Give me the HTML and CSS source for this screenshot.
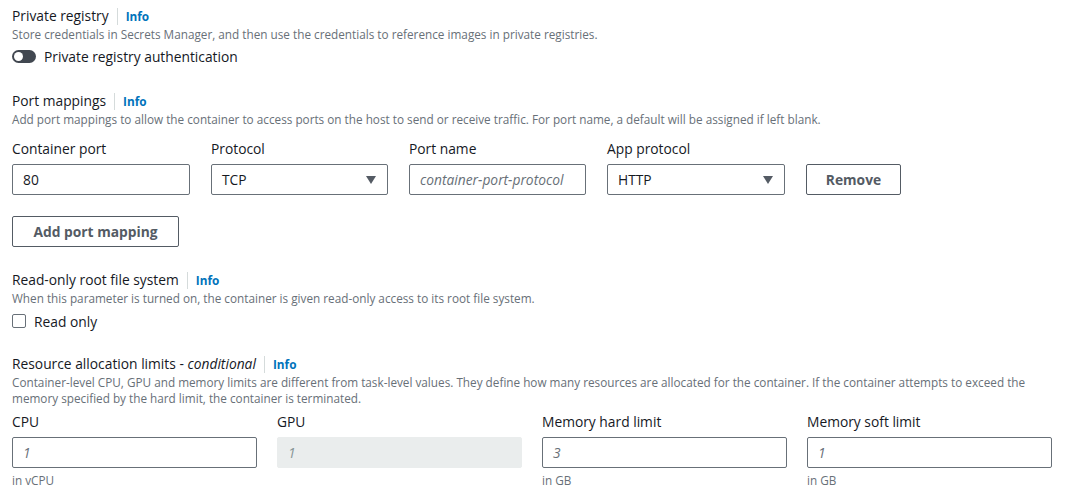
FILE: index.html
```html
<!DOCTYPE html>
<html>
<head>
<meta charset="utf-8">
<link rel="stylesheet" href="styles.css">
</head>
<body>
<div class="page">
  <section class="section s-registry">
    <div class="title-row"><span class="title">Private registry</span><span class="sep"></span><a class="info">Info</a></div>
    <div class="desc">Store credentials in Secrets Manager, and then use the credentials to reference images in private registries.</div>
    <div class="toggle-row"><span class="toggle"><span class="knob"></span></span><span class="toggle-label">Private registry authentication</span></div>
  </section>

  <section class="section s-ports">
    <div class="title-row"><span class="title">Port mappings</span><span class="sep"></span><a class="info">Info</a></div>
    <div class="desc">Add port mappings to allow the container to access ports on the host to send or receive traffic. For port name, a default will be assigned if left blank.</div>
    <div class="port-grid">
      <div class="field"><div class="label">Container port</div><div class="input">80</div></div>
      <div class="field"><div class="label">Protocol</div><div class="input select">TCP<span class="caret"></span></div></div>
      <div class="field"><div class="label">Port name</div><div class="input placeholder">container-port-protocol</div></div>
      <div class="field"><div class="label">App protocol</div><div class="input select">HTTP<span class="caret"></span></div></div>
      <div class="field field-btn"><div class="btn">Remove</div></div>
    </div>
    <div class="btn btn-add">Add port mapping</div>
  </section>

  <section class="section s-readonly">
    <div class="title-row"><span class="title">Read-only root file system</span><span class="sep"></span><a class="info">Info</a></div>
    <div class="desc">When this parameter is turned on, the container is given read-only access to its root file system.</div>
    <div class="check-row"><span class="checkbox"></span><span class="check-label">Read only</span></div>
  </section>

  <section class="section s-resources">
    <div class="title-row"><span class="title">Resource allocation limits - <em>conditional</em></span><span class="sep"></span><a class="info">Info</a></div>
    <div class="desc desc-wide">Container-level CPU, GPU and memory limits are different from task-level values. They define how many resources are allocated for the container. If the container attempts to exceed the memory specified by the hard limit, the container is terminated.</div>
    <div class="res-grid">
      <div class="field"><div class="label">CPU</div><div class="input placeholder">1</div><div class="hint">in vCPU</div></div>
      <div class="field"><div class="label">GPU</div><div class="input placeholder disabled">1</div></div>
      <div class="field"><div class="label">Memory hard limit</div><div class="input placeholder">3</div><div class="hint">in GB</div></div>
      <div class="field"><div class="label">Memory soft limit</div><div class="input placeholder">1</div><div class="hint">in GB</div></div>
    </div>
  </section>
</div>
</body>
</html>
```

FILE: styles.css
```css
* { box-sizing: border-box; }
html, body { margin: 0; padding: 0; background: #ffffff; }
body {
  font-family: "Open Sans", "Noto Sans", Arial, sans-serif;
  color: #16191f;
  font-size: 13.8px;
}
.page {
  padding: 6px 12px 0 12px;
  width: 1060px;
}
.section { display: flex; flex-direction: column; }
.title-row {
  display: flex;
  align-items: center;
  height: 20px;
  line-height: 20px;
}
.title { font-size: 13.8px; color: #16191f; }
.title em { font-style: italic; }
.sep {
  width: 1px;
  height: 17px;
  background: #d5dbdb;
  margin: 0 8px 0 8px;
}
.info {
  font-size: 11.8px;
  font-weight: 700;
  color: #0073bb;
}
.desc {
  font-size: 11.75px;
  line-height: 16px;
  color: #687078;
  margin-top: 0;
}
.desc-wide { width: 1040px; }
.toggle-row {
  display: flex;
  align-items: center;
  margin-top: 3px;
  height: 22px;
}
.toggle {
  width: 24px;
  height: 13px;
  border-radius: 7px;
  background: #414750;
  position: relative;
  margin-right: 8px;
}
.knob {
  position: absolute;
  left: 2px;
  top: 2px;
  width: 9px;
  height: 9px;
  border-radius: 50%;
  background: #ffffff;
}
.toggle-label { font-size: 13.8px; }

.s-ports { margin-top: 24px; }
.port-grid {
  display: grid;
  grid-template-columns: 178px 177px 177px 178px 95px;
  column-gap: 21px;
  margin-top: 11px;
}
.field { display: flex; flex-direction: column; }
.label {
  font-size: 13.8px;
  line-height: 20px;
  height: 20px;
  margin-bottom: 6px;
  padding-top: 1px;
}
.input {
  height: 31px;
  border: 1px solid #687078;
  border-radius: 2px;
  padding: 0 10px;
  display: flex;
  align-items: center;
  font-size: 13.8px;
  color: #16191f;
  position: relative;
}
.placeholder { font-style: italic; color: #687078; font-size: 13.8px; }
.disabled { background: #eaeded; border-color: #eaeded; color: #879596; }
.select { justify-content: space-between; }
.caret {
  width: 0;
  height: 0;
  border-left: 5px solid transparent;
  border-right: 5px solid transparent;
  border-top: 8px solid #545b64;
  margin-right: 1px;
}
.field-btn { justify-content: flex-end; }
.btn {
  height: 31px;
  border: 1px solid #545b64;
  border-radius: 2px;
  display: flex;
  align-items: center;
  justify-content: center;
  font-weight: 700;
  font-size: 13.8px;
  color: #545b64;
  background: #ffffff;
}
.btn-add {
  width: 167px;
  margin-top: 21px;
}

.s-readonly { margin-top: 23px; }
.check-row {
  display: flex;
  align-items: center;
  margin-top: 4px;
  height: 22px;
}
.checkbox {
  width: 14px;
  height: 14px;
  border: 1px solid #687078;
  border-radius: 2px;
  margin-right: 8px;
}
.check-label { font-size: 13.8px; }

.s-resources { margin-top: 22px; }
.res-grid {
  display: grid;
  grid-template-columns: 245px 245px 245px 245px;
  column-gap: 20px;
  margin-top: 5px;
}
.hint {
  font-size: 11.75px;
  line-height: 16px;
  color: #687078;
  margin-top: 4px;
}
```
